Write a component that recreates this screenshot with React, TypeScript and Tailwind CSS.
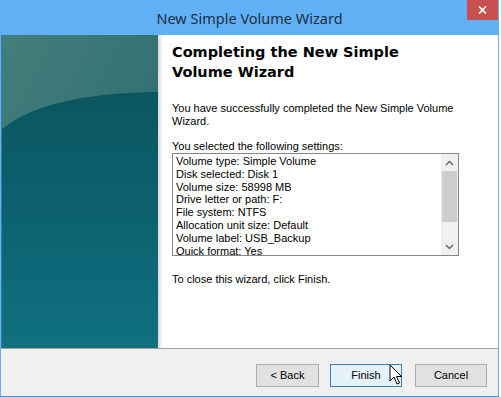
import React from 'react';

const settings = [
  'Volume type: Simple Volume',
  'Disk selected: Disk 1',
  'Volume size: 58998 MB',
  'Drive letter or path: F:',
  'File system: NTFS',
  'Allocation unit size: Default',
  'Volume label: USB_Backup',
  'Quick format: Yes',
];

function TealArt() {
  return (
    <svg width="156" height="313" viewBox="0 0 156 313" className="block">
      <defs>
        <linearGradient id="topg" x1="0" y1="0" x2="1" y2="1">
          <stop offset="0" stopColor="#437e7b" />
          <stop offset="1" stopColor="#27686c" />
        </linearGradient>
        <linearGradient id="botg" x1="0" y1="0" x2="0" y2="1">
          <stop offset="0" stopColor="#0a5660" />
          <stop offset="0.5" stopColor="#0d6271" />
          <stop offset="1" stopColor="#10717f" />
        </linearGradient>
      </defs>
      <rect x="0" y="0" width="156" height="313" fill="url(#topg)" />
      <path d="M0 94 C 30 70, 80 58, 156 57 L156 313 L0 313 Z" fill="url(#botg)" />
    </svg>
  );
}

function Cursor() {
  return (
    <svg width="14" height="22" viewBox="0 0 14 22" className="absolute left-[389px] top-[364px]">
      <path d="M1 1 L1 17 L5 13 L8 20 L10.5 19 L7.5 12.5 L12.5 12.5 Z" fill="#fff" stroke="#000" strokeWidth="1" strokeLinejoin="miter" />
    </svg>
  );
}

export default function App() {
  return (
    <div className="relative w-[501px] h-[397px] bg-white overflow-hidden" style={{ fontFamily: '"Liberation Sans", Arial, sans-serif' }}>
      <div className="w-[499px] h-[397px] flex flex-col bg-[#62b1f6] border-b border-[#4f8fcf]">
        <div className="relative h-[35px] flex items-center justify-center">
          <span className="text-[14.5px] text-[#1c2f45] pt-[2px]" style={{ fontFamily: '"Noto Sans", "Open Sans", sans-serif' }}>
            New Simple Volume Wizard
          </span>
          <div className="absolute top-0 right-[1px] w-[31px] h-[20px] bg-[#c75050] flex items-center justify-center">
            <svg width="9" height="8" viewBox="0 0 9 8">
              <path d="M1 0.5 L8 7.5 M8 0.5 L1 7.5" stroke="#fff" strokeWidth="1.6" />
            </svg>
          </div>
        </div>
        <div className="flex-1 flex flex-col ml-[1px] mr-[1px] bg-white">
          <div className="h-[313px] flex">
            <div className="w-[157px] shrink-0 pl-[1px] bg-[#3a7d99]">
              <TealArt />
            </div>
            <div className="flex-1 relative bg-white pl-[14px] pt-[7px]">
              <div className="absolute left-0 top-0 bottom-0 w-[5px] bg-gradient-to-r from-[#d9d9d9] to-white" />
              <h1 className="relative text-[14.5px] leading-[20px] font-bold text-black" style={{ fontFamily: '"DejaVu Sans", Verdana, sans-serif' }}>
                Completing the New Simple
                <br />
                Volume Wizard
              </h1>
              <p className="mt-[20px] text-[11px] leading-[13px] text-black w-[290px]">
                You have successfully completed the New Simple Volume Wizard.
              </p>
              <p className="mt-[12px] text-[11px] leading-[13px] text-black">You selected the following settings:</p>
              <div className="mt-0 w-[287px] h-[103px] border border-[#828790] flex overflow-hidden">
                <div className="flex-1 pl-[3px] pt-[1px] overflow-hidden">
                  {settings.map((s) => (
                    <div key={s} className="text-[11px] leading-[12.8px] text-black whitespace-nowrap">
                      {s}
                    </div>
                  ))}
                </div>
                <div className="w-[17px] flex flex-col items-center bg-[#f0f0f0]">
                  <div className="h-[17px] flex items-center justify-center">
                    <svg width="9" height="6" viewBox="0 0 9 6">
                      <path d="M1 5 L4.5 1.5 L8 5" fill="none" stroke="#606060" strokeWidth="1.3" />
                    </svg>
                  </div>
                  <div className="w-[15px] h-[51px] bg-[#cdcdcd]" />
                  <div className="flex-1" />
                  <div className="h-[17px] flex items-center justify-center">
                    <svg width="9" height="6" viewBox="0 0 9 6">
                      <path d="M1 1 L4.5 4.5 L8 1" fill="none" stroke="#606060" strokeWidth="1.3" />
                    </svg>
                  </div>
                </div>
              </div>
              <p className="mt-[17px] text-[11px] leading-[13px] text-black">To close this wizard, click Finish.</p>
            </div>
          </div>
          <div className="flex-1 border-t border-[#a0a0a0] bg-[#f0f0f0] flex items-start justify-end pr-[11px] pt-[15px]">
            <button className="w-[63px] h-[23px] border border-[#adadad] bg-[#e1e1e1] text-[11px] text-black">&lt; Back</button>
            <button className="ml-[11px] w-[72px] h-[23px] border border-[#3c7fb1] bg-[#e5f1fb] text-[11px] text-black">Finish</button>
            <button className="ml-[13px] w-[72px] h-[23px] border border-[#adadad] bg-[#e1e1e1] text-[11px] text-black">Cancel</button>
          </div>
        </div>
      </div>
      <Cursor />
    </div>
  );
}
